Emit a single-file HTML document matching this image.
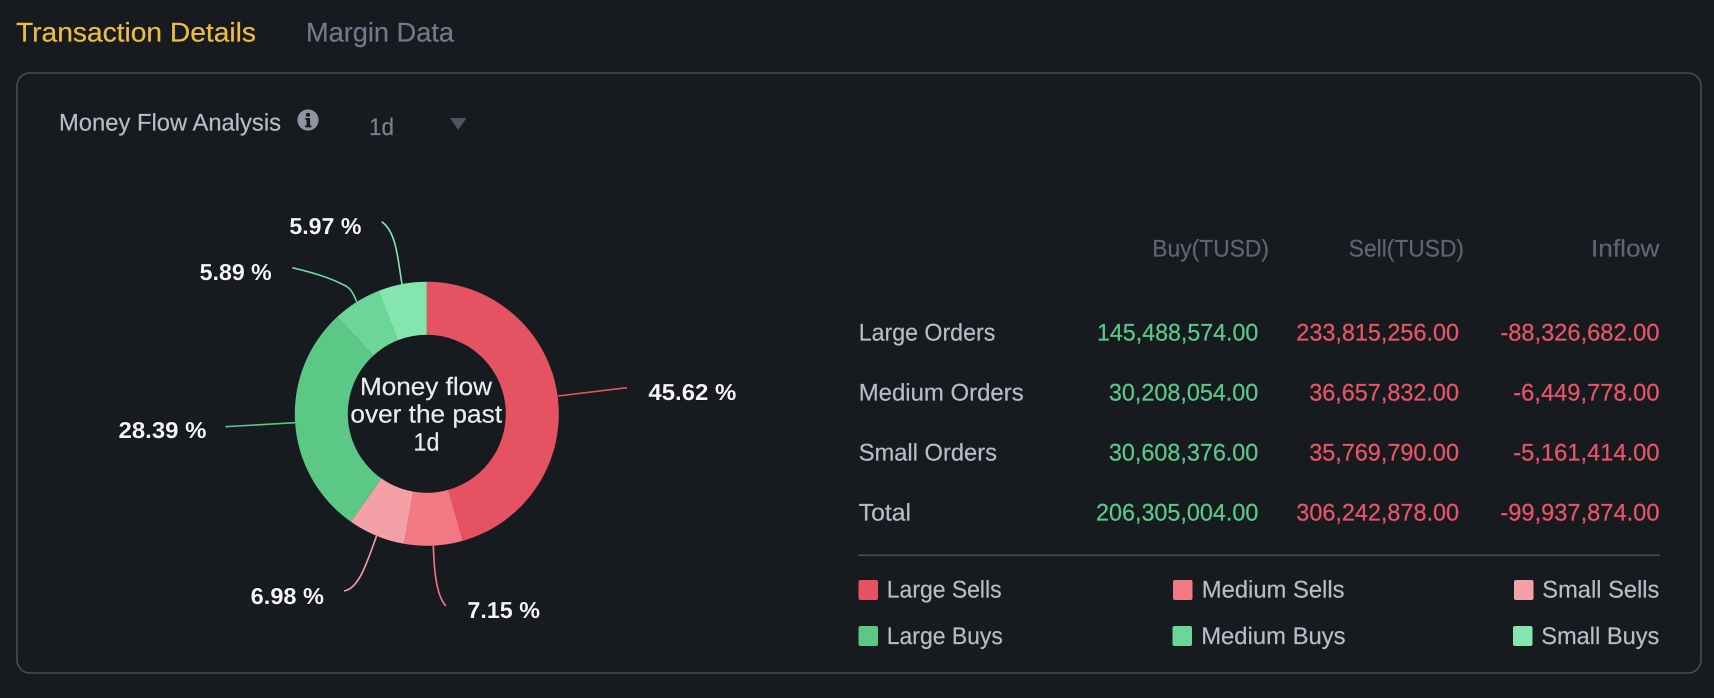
<!DOCTYPE html>
<html lang="en">
<head>
<meta charset="utf-8">
<title>Money Flow Analysis</title>
<style>
html,body{margin:0;padding:0;background:#171a1f;width:1714px;height:698px;overflow:hidden}
svg{display:block}
text{font-family:"Liberation Sans",Arial,sans-serif;font-size:24px;text-rendering:geometricPrecision}
.lb{fill:#b7bdc6;stroke:#b7bdc6;stroke-width:.2px}
.hd{fill:#5e6673;stroke:#5e6673;stroke-width:.2px}
.g{fill:#5ac987;stroke:#5ac987;stroke-width:.25px}
.r{fill:#e95566;stroke:#e95566;stroke-width:.25px}
.pct{font-weight:700;font-size:23px;fill:#f5f5f5;paint-order:stroke;stroke:#000;stroke-width:1.2px;stroke-opacity:.35}
.ctr{font-size:25px;fill:#eaecef;stroke:#eaecef;stroke-width:.2px}
.ll{fill:none;stroke-width:1.6}
</style>
</head>
<body>
<svg xmlns="http://www.w3.org/2000/svg" width="1714" height="698" viewBox="0 0 1714 698">
<rect width="1714" height="698" fill="#171a1f"/>

<!-- tabs -->
<text x="16" y="41.7" style="font-size:27px;stroke:#edbd3e;stroke-width:.2px" fill="#edbd3e" textLength="240" lengthAdjust="spacingAndGlyphs">Transaction Details</text>
<text x="306" y="41.7" style="font-size:27px;stroke:#707a8a;stroke-width:.2px" fill="#707a8a" textLength="148" lengthAdjust="spacingAndGlyphs">Margin Data</text>

<!-- card -->
<rect x="17" y="73" width="1684" height="600" rx="13" ry="13" fill="none" stroke="#474d57" stroke-width="1.6"/>

<!-- header -->
<text x="59" y="130.5" class="lb" textLength="222" lengthAdjust="spacingAndGlyphs">Money Flow Analysis</text>
<circle cx="308" cy="120" r="10.6" fill="#8c94a2"/>
<rect x="306" y="113" width="4" height="3.6" rx="1" fill="#171a1f"/>
<path d="M305.4 118h4.6v7.4h1.400v2h-6.200v-2h1.400v-5.400h-1.200z" fill="#171a1f"/>
<text x="369" y="135" style="font-size:24px;stroke:#7a8290;stroke-width:.2px" fill="#7a8290" textLength="25" lengthAdjust="spacingAndGlyphs">1d</text>
<path d="M450 118h16.500l-8.250 12z" fill="#4f535d"/>

<!-- donut -->
<path d="M426.8 281.800A132 132 0 0 1 462.68 540.84L448.27 489.83A79 79 0 0 0 426.8 334.800Z" fill="#e55362"/>
<path d="M462.68 540.84A132 132 0 0 1 403.94 543.800L413.12 491.61A79 79 0 0 0 448.27 489.83Z" fill="#f37985"/>
<path d="M403.94 543.800A132 132 0 0 1 350.9 521.8L381.37 478.43A79 79 0 0 0 413.12 491.61Z" fill="#f3a0a6"/>
<path d="M350.9 521.8A132 132 0 0 1 337.29 316.78L373.23 355.73A79 79 0 0 0 381.37 478.43Z" fill="#5bc886"/>
<path d="M337.29 316.78A132 132 0 0 1 378.44 290.97L397.85 340.29A79 79 0 0 0 373.23 355.73Z" fill="#6cd699"/>
<path d="M378.44 290.97A132 132 0 0 1 426.8 281.800L426.8 334.800A79 79 0 0 0 397.85 340.29Z" fill="#84e6ae"/>

<!-- leader lines -->
<path class="ll" stroke="#e55362" d="M558 396L627 387.700"/>
<path class="ll" stroke="#f37985" d="M433.300 545.700C434 566 435.500 595 446 606"/>
<path class="ll" stroke="#f3a0a6" d="M376.500 536C366 566 358 589 344 591"/>
<path class="ll" stroke="#5bc886" d="M295 422.700L225.400 426.700"/>
<path class="ll" stroke="#6cd699" d="M356.700 301.700C352 290 349 287.500 344 285C335 280.500 323 275 292.300 267.700"/>
<path class="ll" stroke="#84e6ae" d="M402 284C398 262 397 232 381.600 221.700"/>

<!-- pct labels -->
<text class="pct" x="648.400" y="400" textLength="88" lengthAdjust="spacingAndGlyphs">45.62 %</text>
<text class="pct" x="467.400" y="618" textLength="72.600" lengthAdjust="spacingAndGlyphs">7.15 %</text>
<text class="pct" x="250.700" y="604" textLength="73.300" lengthAdjust="spacingAndGlyphs">6.98 %</text>
<text class="pct" x="118.500" y="438" textLength="88" lengthAdjust="spacingAndGlyphs">28.39 %</text>
<text class="pct" x="199.700" y="280" textLength="72" lengthAdjust="spacingAndGlyphs">5.89 %</text>
<text class="pct" x="289.400" y="234" textLength="72" lengthAdjust="spacingAndGlyphs">5.97 %</text>

<!-- center -->
<text class="ctr" x="360" y="395" textLength="132" lengthAdjust="spacingAndGlyphs">Money flow</text>
<text class="ctr" x="350.400" y="422.700" textLength="151.600" lengthAdjust="spacingAndGlyphs">over the past</text>
<text class="ctr" x="413.500" y="450.700" textLength="26" lengthAdjust="spacingAndGlyphs">1d</text>

<!-- table header -->
<text class="hd" x="1152.300" y="256.700" textLength="116.700" lengthAdjust="spacingAndGlyphs">Buy(TUSD)</text>
<text class="hd" x="1348.800" y="256.700" textLength="115.200" lengthAdjust="spacingAndGlyphs">Sell(TUSD)</text>
<text class="hd" x="1591" y="256.700" textLength="68.500" lengthAdjust="spacingAndGlyphs">Inflow</text>

<!-- rows -->
<text class="lb" x="858.700" y="340.700" textLength="136.600" lengthAdjust="spacingAndGlyphs">Large Orders</text>
<text class="g" x="1097" y="340.700" textLength="161.300" lengthAdjust="spacingAndGlyphs">145,488,574.00</text>
<text class="r" x="1296.300" y="340.700" textLength="162.700" lengthAdjust="spacingAndGlyphs">233,815,256.00</text>
<text class="r" x="1500.400" y="340.700" textLength="159.100" lengthAdjust="spacingAndGlyphs">-88,326,682.00</text>

<text class="lb" x="858.700" y="400.700" textLength="165" lengthAdjust="spacingAndGlyphs">Medium Orders</text>
<text class="g" x="1108.900" y="400.700" textLength="149.400" lengthAdjust="spacingAndGlyphs">30,208,054.00</text>
<text class="r" x="1309.200" y="400.700" textLength="149.800" lengthAdjust="spacingAndGlyphs">36,657,832.00</text>
<text class="r" x="1513.300" y="400.700" textLength="146.200" lengthAdjust="spacingAndGlyphs">-6,449,778.00</text>

<text class="lb" x="858.700" y="460.700" textLength="138.300" lengthAdjust="spacingAndGlyphs">Small Orders</text>
<text class="g" x="1108.900" y="460.700" textLength="149.400" lengthAdjust="spacingAndGlyphs">30,608,376.00</text>
<text class="r" x="1309.200" y="460.700" textLength="149.800" lengthAdjust="spacingAndGlyphs">35,769,790.00</text>
<text class="r" x="1513.300" y="460.700" textLength="146.200" lengthAdjust="spacingAndGlyphs">-5,161,414.00</text>

<text class="lb" x="858.700" y="520.700" textLength="52.300" lengthAdjust="spacingAndGlyphs">Total</text>
<text class="g" x="1096" y="520.700" textLength="162.300" lengthAdjust="spacingAndGlyphs">206,305,004.00</text>
<text class="r" x="1296.300" y="520.700" textLength="162.700" lengthAdjust="spacingAndGlyphs">306,242,878.00</text>
<text class="r" x="1500.400" y="520.700" textLength="159.100" lengthAdjust="spacingAndGlyphs">-99,937,874.00</text>

<rect x="858" y="554.500" width="802" height="1.500" fill="#474d57"/>

<!-- legend -->
<rect x="858.500" y="580" width="19.500" height="20" rx="2" fill="#e55362"/>
<text class="lb" x="886.800" y="597.500" textLength="114.800" lengthAdjust="spacingAndGlyphs">Large Sells</text>
<rect x="1173" y="580" width="19.500" height="20" rx="2" fill="#f37985"/>
<text class="lb" x="1201.800" y="597.500" textLength="142.700" lengthAdjust="spacingAndGlyphs">Medium Sells</text>
<rect x="1514" y="580" width="19.500" height="20" rx="2" fill="#f3a0a6"/>
<text class="lb" x="1542.300" y="597.500" textLength="117.100" lengthAdjust="spacingAndGlyphs">Small Sells</text>

<rect x="858.500" y="626" width="19.500" height="20" rx="2" fill="#5bc886"/>
<text class="lb" x="886.800" y="644" textLength="116" lengthAdjust="spacingAndGlyphs">Large Buys</text>
<rect x="1172.500" y="626" width="19.500" height="20" rx="2" fill="#6cd699"/>
<text class="lb" x="1201.200" y="644" textLength="144.400" lengthAdjust="spacingAndGlyphs">Medium Buys</text>
<rect x="1513" y="626" width="19.500" height="20" rx="2" fill="#84e6ae"/>
<text class="lb" x="1541.200" y="644" textLength="118.200" lengthAdjust="spacingAndGlyphs">Small Buys</text>
</svg>
</body>
</html>
